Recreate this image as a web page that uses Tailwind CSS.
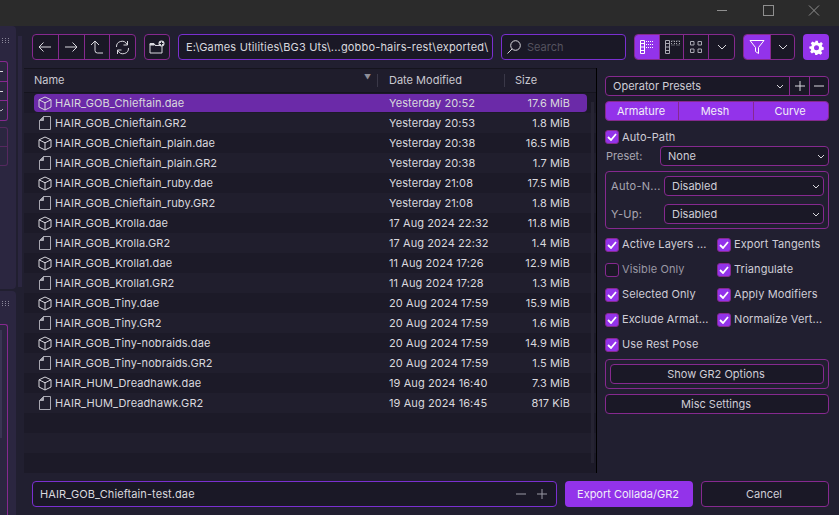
<!DOCTYPE html>
<html lang="en">
<head>
<meta charset="UTF-8">
<title>Export Collada/GR2</title>
<script src="https://cdn.jsdelivr.net/npm/@tailwindcss/browser@4"></script>
</head>
<body class="w-[839px] h-[515px] overflow-hidden bg-[#211f30] text-[#d9d8de] text-[11px] font-['Inter',sans-serif]">
<!-- title bar -->
<div class="h-[26px] bg-[#2b2b2b] flex justify-end pr-[2px] text-[#8f8f8f]">
  <svg class="w-[46px] h-[26px]" viewBox="0 0 46 26" fill="none" stroke="currentColor"><path d="M18 10.5H28"/></svg>
  <svg class="w-[46px] h-[26px]" viewBox="0 0 46 26" fill="none" stroke="currentColor"><rect x="18.5" y="5.5" width="10" height="10"/></svg>
  <svg class="w-[46px] h-[26px]" viewBox="0 0 46 26" fill="none" stroke="currentColor"><path d="M18 5.5L28 15.5M28 5.5L18 15.5"/></svg>
</div>
<div class="flex h-[489px]">
  <!-- left docks, cut off at the window edge -->
  <div class="w-[16px] flex flex-col gap-[2px] shrink-0">
    <div class="h-[263px] bg-[#2b2640] rounded-r-[4px] overflow-hidden">
      <svg class="mt-[12px] ml-[2px]" width="8" height="5" viewBox="0 0 8 5" fill="#8a8799"><path d="M0 0h1v1H0zM3 0h1v1H3zM6 0h1v1H6zM0 2h1v1H0zM3 2h1v1H3zM6 2h1v1H6zM0 4h1v1H0zM3 4h1v1H3zM6 4h1v1H6z"/></svg>
      <div class="w-[8px] h-[60px] mt-[18px] border border-l-0 border-[#86298f] rounded-r-[3px] flex flex-col text-[#d9d8de]">
        <div class="h-[20px] border-b border-[#86298f] flex items-center"><div class="w-[3px] h-px bg-[#d9d8de]"></div></div>
        <div class="h-[19px] border-b border-[#86298f] flex items-center"><div class="w-[3px] h-px bg-[#d9d8de]"></div></div>
        <svg class="mt-[7px]" width="4" height="4" viewBox="0 0 4 4" fill="none" stroke="#b9b8c0"><path d="M-2 1l3 2 2-2"/></svg>
      </div>
      <div class="w-[8px] h-[39px] mt-[6px] border border-l-0 border-[#55295f] rounded-r-[3px]">
        <div class="h-[19px] border-b border-[#55295f]"></div>
      </div>
    </div>
    <div class="flex-1 bg-[#2b2640] rounded-tr-[4px] overflow-hidden">
      <svg class="mt-[10px] ml-[2px]" width="8" height="5" viewBox="0 0 8 5" fill="#8a8799"><path d="M0 0h1v1H0zM3 0h1v1H3zM6 0h1v1H6zM0 2h1v1H0zM3 2h1v1H3zM6 2h1v1H6zM0 4h1v1H0zM3 4h1v1H3zM6 4h1v1H6z"/></svg>
      <div class="w-[8px] h-[200px] mt-[18px] border-t border-r border-[#86298f] rounded-tr-[3px] pt-[5px]">
        <div class="w-[2px] h-[108px] bg-[#3a3553]"></div>
      </div>
    </div>
  </div>
  <div class="w-[2px]"></div>
  <div class="w-[4px] h-[251px] bg-[#2b2640] mt-[10px]"></div>
  <!-- main -->
  <div class="flex-1 flex flex-col min-w-0">
    <!-- toolbar -->
    <div class="flex items-center h-[42px] pt-[8px] pb-[8px] pl-[10px] pr-[10px]" id="toolbar">
      <div class="flex h-[26px] w-[104px] border border-[#86298f] rounded-[4px] bg-[#1a1826] text-[#d9d8de]">
        <div class="flex-1 flex items-center justify-center border-r border-[#86298f]"><svg width="14" height="12" viewBox="0 0 14 12" fill="none" stroke="currentColor"><path d="M13 6H1M5.5 1.5L1 6l4.5 4.5"/></svg></div>
        <div class="flex-1 flex items-center justify-center border-r border-[#86298f]"><svg width="14" height="12" viewBox="0 0 14 12" fill="none" stroke="currentColor"><path d="M1 6h12M8.5 1.5L13 6l-4.5 4.5"/></svg></div>
        <div class="flex-1 flex items-center justify-center border-r border-[#86298f]"><svg width="14" height="14" viewBox="0 0 14 14" fill="none" stroke="currentColor"><path d="M13 13H7.5Q5 13 5 10.5V1M1 5l4-4 4 4"/></svg></div>
        <div class="flex-1 flex items-center justify-center"><svg width="15" height="15" viewBox="0 0 15 15" fill="none" stroke="currentColor"><path d="M1.5 7A5.5 5.5 0 0 1 12 4.5M13.5 8A5.5 5.5 0 0 1 3 10.5M12.5 1v4h-4M2.5 14v-4h4"/></svg></div>
      </div>
      <div class="ml-[8px] flex items-center justify-center h-[26px] w-[26px] border border-[#86298f] rounded-[4px] bg-[#1a1826]">
        <svg width="16" height="14" viewBox="0 0 16 14" fill="none" stroke="#d9d8de"><path d="M1 4.5V13H13V5.5H6V4.5Z"/><path d="M1 3.5H5V5H1Z" fill="#d9d8de"/><circle cx="12.5" cy="3.5" r="3" fill="#d9d8de" stroke="none"/><path d="M12.5 1.7v3.6M10.7 3.5h3.6" stroke="#1a1826"/></svg>
      </div>
      <div class="ml-[8px] w-[315px] h-[26px] flex items-center px-[7px] border border-[#7a2fd0] rounded-[4px] bg-[#1a1826] tracking-[0.18px] whitespace-nowrap overflow-hidden">E:\Games Utilities\BG3 Uts\...gobbo-hairs-rest\exported\</div>
      <div class="ml-[8px] w-[125px] h-[26px] flex items-center pl-[4px] border border-[#7a2fd0] rounded-[4px] bg-[#1a1826] text-[#55535f]">
        <svg width="16" height="16" viewBox="0 0 16 16" fill="none" stroke="#d9d8de"><circle cx="9.5" cy="6.5" r="4.8"/><path d="M6 10L1.5 14.5"/></svg>
        <span class="ml-[5px]">Search</span>
      </div>
      <div class="ml-[8px] flex h-[26px] w-[101px] border border-[#86298f] rounded-[4px] bg-[#1a1826] overflow-hidden text-[#a9a8b2]">
        <div class="w-[25px] bg-[#9333ea] flex items-center justify-center border-r border-[#86298f]"><svg width="16" height="14" viewBox="0 0 16 14" fill="none" stroke="#fff"><path d="M1.500 .5h4v13h-4zM1.500 3.500h4M1.500 7h4M1.500 10.500h4"/><path d="M7 1.500h8M7 4.500h8M7 7.500h8" stroke-dasharray="1 1"/></svg></div>
        <div class="w-[24px] flex items-center justify-center border-r border-[#86298f]"><svg width="16" height="14" viewBox="0 0 16 14" fill="none" stroke="currentColor"><path d="M1.500 .5h4v13h-4zM1.500 3.500h4M1.500 7h4M1.500 10.500h4"/><path d="M7.500 1h3M7.500 5h3M12.500 1h3M12.500 5h3" stroke-dasharray="1 1"/><path d="M7.500 1v4M10.500 1v4M12.500 1v4M15.500 1v4" stroke-dasharray="1 1"/></svg></div>
        <div class="w-[25px] flex items-center justify-center border-r border-[#86298f]"><svg width="14" height="14" viewBox="0 0 14 14" fill="none" stroke="currentColor"><path d="M1.500 1.500h3.500v3.500H1.500zM9 1.500h3.500v3.500H9zM1.500 9h3.500v3.500H1.500zM9 9h3.500v3.500H9z"/></svg></div>
        <div class="flex-1 flex items-center justify-center"><svg width="10" height="6" viewBox="0 0 10 6" fill="none" stroke="#d9d8de"><path d="M1 1l4 4 4-4"/></svg></div>
      </div>
      <div class="ml-[8px] flex h-[26px] w-[52px] border border-[#86298f] rounded-[4px] bg-[#1a1826] overflow-hidden">
        <div class="w-[26px] bg-[#9333ea] flex items-center justify-center"><svg width="16" height="16" viewBox="0 0 16 16" fill="none" stroke="#fff"><path d="M1 1.500H15L9.500 8.500V14.500L6.500 12.500V8.500Z"/></svg></div>
        <div class="flex-1 flex items-center justify-center border-l border-[#86298f]"><svg width="10" height="6" viewBox="0 0 10 6" fill="none" stroke="#d9d8de"><path d="M1 1l4 4 4-4"/></svg></div>
      </div>
      <div class="ml-[8px] flex items-center justify-center h-[26px] w-[26px] rounded-[4px] bg-[#9333ea]">
        <svg width="15" height="15" viewBox="0 0 24 24" fill="#fff"><path fill-rule="evenodd" d="M10 1h4l.7 3.200 1.900.8 2.800-1.800 2.800 2.800-1.800 2.800.8 1.900L23.500 11.500v4l-3.200.7-.8 1.900 1.800 2.800-2.800 2.800-2.800-1.800-1.900.8L13 24h-3l-.7-3.300-1.900-.8-2.800 1.800-2.800-2.800 1.800-2.800-.8-1.900L.5 13.500v-3l3.300-.7.800-1.900-1.800-2.800 2.800-2.800 2.800 1.800 1.900-.8zM12 8.500a4 4 0 1 0 0 8 4 4 0 0 0 0-8z"/></svg>
      </div>
    </div>
    <!-- middle: file table and options -->
    <div class="flex h-[405px] pl-[2px]">
      <div class="w-[573px] border-r border-black bg-[#1c1a28] flex flex-col shrink-0">
        <div class="h-[25px] flex items-center bg-[#1f1d2c] border-t border-b border-[#15141e] text-[#c9c8d0] shrink-0">
          <div class="w-[353px] pl-[10px] relative flex items-center">Name<span class="absolute right-[6px] top-[1px] text-[7px] text-[#8f8f99]">▼</span></div>
          <div class="h-[13px] border-l border-[#3a3848]"></div>
          <div class="w-[126px] pl-[11px]">Date Modified</div>
          <div class="h-[13px] border-l border-[#3a3848]"></div>
          <div class="pl-[10px]">Size</div>
        </div>
        <div class="flex-1 overflow-hidden relative" id="rows"></div>
      </div>
      <!-- options panel -->
      <div class="flex-1 pl-[8px] pt-[8px] pr-[10px] text-[#cfcdd6]">
        <div class="flex h-[20px] border border-[#86298f] rounded-[4px] bg-[#1a1826]">
          <div class="flex-1 flex items-center justify-between pl-[7px] pr-[5px]">Operator Presets<svg width="8" height="5" viewBox="0 0 8 5" fill="none" stroke="#d9d8de"><path d="M1 1l3 3 3-3"/></svg></div>
          <div class="w-[20px] border-l border-[#86298f] flex items-center justify-center"><svg width="10" height="10" viewBox="0 0 10 10" stroke="#d9d8de"><path d="M5 0v10M0 5h10"/></svg></div>
          <div class="w-[19px] border-l border-[#86298f] flex items-center justify-center"><svg width="10" height="10" viewBox="0 0 10 10" stroke="#d9d8de"><path d="M0 5h10"/></svg></div>
        </div>
        <div class="flex h-[20px] mt-[5px] rounded-[4px] bg-[#9333ea] border border-[#86298f] text-[#f1eef8] text-center overflow-hidden">
          <div class="w-[73px] pr-[2px] leading-[18px] border-r border-[#86298f]">Armature</div>
          <div class="w-[75px] pr-[2px] leading-[18px] border-r border-[#86298f]">Mesh</div>
          <div class="flex-1 pr-[2px] leading-[18px]">Curve</div>
        </div>
        <div id="autopath" class="mt-[8px] h-[16px]"></div>
        <div class="flex items-center h-[20px] mt-[1px]">
          <div class="w-[55px] pl-[1px] text-[#a9a7b2]">Preset:</div>
          <div class="flex-1 h-[20px] flex items-center justify-between border border-[#86298f] rounded-[4px] bg-[#1a1826] pl-[7px] pr-[3px]">None<svg width="8" height="5" viewBox="0 0 8 5" fill="none" stroke="#d9d8de"><path d="M1 1l3 3 3-3"/></svg></div>
        </div>
        <div class="mt-[5px] h-[58px] border border-[#86298f] rounded-[4px] pl-[5px] pr-[4px] pt-[4px]">
          <div class="flex items-center h-[20px]">
            <div class="w-[53px] text-[#a9a7b2] tracking-[0.3px]">Auto-N...</div>
            <div class="flex-1 h-[20px] flex items-center justify-between border border-[#86298f] rounded-[4px] bg-[#1a1826] pl-[7px] pr-[3px]">Disabled<svg width="8" height="5" viewBox="0 0 8 5" fill="none" stroke="#d9d8de"><path d="M1 1l3 3 3-3"/></svg></div>
          </div>
          <div class="flex items-center h-[20px] mt-[8px]">
            <div class="w-[53px] text-[#a9a7b2] tracking-[0.3px]">Y-Up:</div>
            <div class="flex-1 h-[20px] flex items-center justify-between border border-[#86298f] rounded-[4px] bg-[#1a1826] pl-[7px] pr-[3px]">Disabled<svg width="8" height="5" viewBox="0 0 8 5" fill="none" stroke="#d9d8de"><path d="M1 1l3 3 3-3"/></svg></div>
          </div>
        </div>
        <div id="checks" class="mt-[3px] grid grid-cols-[112px_1fr] auto-rows-[25px]"></div>
        <div class="h-[30px] mt-[2px] border border-[#86298f] rounded-[4px] p-[4px]">
          <div class="h-[20px] pr-[2px] border border-[#86298f] rounded-[4px] bg-[#1a1826] text-center leading-[18px]">Show GR2 Options</div>
        </div>
        <div class="h-[20px] pr-[2px] mt-[5px] border border-[#86298f] rounded-[4px] bg-[#1a1826] text-center leading-[18px]">Misc Settings</div>
      </div>
    </div>
    <!-- bottom bar -->
    <div class="flex pl-[10px] pt-[8px] gap-[8px]">
      <div class="w-[525px] h-[26px] flex items-center justify-between pl-[7px] pr-[9px] border border-[#7a2fd0] rounded-[4px] bg-[#1a1826] tracking-[0.1px]">
        HAIR_GOB_Chieftain-test.dae
        <span class="flex items-center gap-[11px]"><svg width="10" height="10" viewBox="0 0 10 10" stroke="#9a99a5"><path d="M0 5h10"/></svg><svg width="10" height="10" viewBox="0 0 10 10" stroke="#9a99a5"><path d="M5 0v10M0 5h10"/></svg></span>
      </div>
      <div class="w-[128px] h-[26px] pr-[2px] flex items-center justify-center bg-[#9333ea] rounded-[4px] text-[#f1eef8]">Export Collada/GR2</div>
      <div class="w-[128px] h-[26px] pr-[2px] flex items-center justify-center border border-[#86298f] rounded-[4px] bg-[#1a1826] text-[#cfcdd6]">Cancel</div>
    </div>
  </div>
</div>
<script>
const cube = '<svg width="14" height="15" viewBox="0 0 14 15" fill="none" stroke="#d9d8de"><path d="M7 1L13 3.800V11L7 14L1 11V3.800ZM1 3.800L7 6.800L13 3.800M7 6.800V14"/></svg>'
const doc = '<svg width="12" height="14" viewBox="0 0 12 14" fill="none" stroke="#a9a8b2"><path d="M4.500 .5H11.500V13.500H.5V4.500Z"/><path d="M4.500 .5V4.500H.5Z" fill="#a9a8b2"/></svg>'
const files = [
  ['HAIR_GOB_Chieftain.dae','Yesterday 20:52','17.6 MiB'],
  ['HAIR_GOB_Chieftain.GR2','Yesterday 20:53','1.8 MiB'],
  ['HAIR_GOB_Chieftain_plain.dae','Yesterday 20:38','16.5 MiB'],
  ['HAIR_GOB_Chieftain_plain.GR2','Yesterday 20:38','1.7 MiB'],
  ['HAIR_GOB_Chieftain_ruby.dae','Yesterday 21:08','17.5 MiB'],
  ['HAIR_GOB_Chieftain_ruby.GR2','Yesterday 21:08','1.8 MiB'],
  ['HAIR_GOB_Krolla.dae','17 Aug 2024 22:32','11.8 MiB'],
  ['HAIR_GOB_Krolla.GR2','17 Aug 2024 22:32','1.4 MiB'],
  ['HAIR_GOB_Krolla1.dae','11 Aug 2024 17:26','12.9 MiB'],
  ['HAIR_GOB_Krolla1.GR2','11 Aug 2024 17:28','1.3 MiB'],
  ['HAIR_GOB_Tiny.dae','20 Aug 2024 17:59','15.9 MiB'],
  ['HAIR_GOB_Tiny.GR2','20 Aug 2024 17:59','1.6 MiB'],
  ['HAIR_GOB_Tiny-nobraids.dae','20 Aug 2024 17:59','14.9 MiB'],
  ['HAIR_GOB_Tiny-nobraids.GR2','20 Aug 2024 17:59','1.5 MiB'],
  ['HAIR_HUM_Dreadhawk.dae','19 Aug 2024 16:40','7.3 MiB'],
  ['HAIR_HUM_Dreadhawk.GR2','19 Aug 2024 16:45','817 KiB'],
  ['','',''],['','',''],['','','']
]
let html = ''
files.forEach((f, i) => {
  const stripe = i % 2 ? 'bg-[#201e2d]' : 'bg-[#1c1a28]'
  const sel = i == 0 ? 'bg-[#6b2aa8] rounded-[4px]' : ''
  const icon = f[0] ? (f[0].endsWith('dae') ? cube : doc) : ''
  html += `<div class="h-[20px] flex items-center ${stripe}"><div class="ml-[10px] w-[553px] h-[18px] flex items-center whitespace-nowrap tracking-[0.08px] ${sel}"><span class="w-[21px] flex justify-center shrink-0 pl-[1px]">${icon}</span><span class="w-[334px] shrink-0">${f[0]}</span><span class="w-[115px] shrink-0">${f[1]}</span><span class="w-[66px] text-right shrink-0">${f[2]}</span></div></div>`
})
document.getElementById('rows').innerHTML = html + '<div class="absolute right-[2px] top-[9px] w-[3px] bottom-[10px] bg-[#262433]"></div>'

const box = on => on
  ? '<span class="w-[14px] h-[14px] rounded-[3px] bg-[#9333ea] border border-[#86298f] flex items-center justify-center shrink-0"><svg width="10" height="8" viewBox="0 0 10 8" fill="none" stroke="#fff" stroke-width="1.800"><path d="M1 4l3 3 5-6"/></svg></span>'
  : '<span class="w-[14px] h-[14px] rounded-[3px] bg-[#1a1826] border border-[#86298f] shrink-0"></span>'
const row = (label, on) => `<div class="flex items-center gap-[3px] whitespace-nowrap tracking-[0.1px] ${on ? '' : 'text-[#9a98a4]'}">${box(on)}<span>${label}</span></div>`
document.getElementById('autopath').innerHTML = row('Auto-Path', true)
const opts = [['Active Layers ...',1],['Export Tangents',1],['Visible Only',0],['Triangulate',1],['Selected Only',1],['Apply Modifiers',1],['Exclude Armat...',1],['Normalize Vert...',1],['Use Rest Pose',1]]
document.getElementById('checks').innerHTML = opts.map(o => row(o[0], !!o[1])).join('')
</script>
</body>
</html>
